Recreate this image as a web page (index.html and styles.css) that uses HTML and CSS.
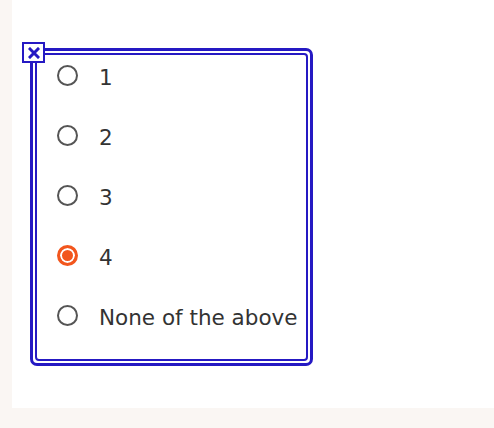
FILE: index.html
```html
<!DOCTYPE html>
<html lang="en">
<head>
    <meta charset="UTF-8">
    <title>Choice</title>
    <link rel="stylesheet" href="styles.css">
</head>
<body>

<div class="panel">
    <div class="frame">
        <span class="close">
            <svg width="12" height="12" viewBox="0 0 12 12">
                <path d="M2 2 L10 10 M10 2 L2 10" stroke="#2519c3" stroke-width="3" stroke-linecap="square"/>
            </svg>
        </span>
        <div class="inner">
            <label class="option"><input type="radio" name="answer"><span>1</span></label>
            <label class="option"><input type="radio" name="answer"><span>2</span></label>
            <label class="option"><input type="radio" name="answer"><span>3</span></label>
            <label class="option"><input type="radio" name="answer" checked><span>4</span></label>
            <label class="option"><input type="radio" name="answer"><span>None of the above</span></label>
        </div>
    </div>
</div>

</body>
</html>
```

FILE: styles.css
```css
html, body {
    margin: 0;
    padding: 0;
    height: 100%;
    background-color: #faf6f3;
    font-family: "DejaVu Sans", Verdana, sans-serif;
    color: #333;
    overflow: hidden;
}
.panel {
    margin-left: 12px;
    height: 408px;
    background-color: white;
    padding: 48px 0 0 18px;
    box-sizing: border-box;
}
.frame {
    position: relative;
    display: inline-block;
    border: 3px solid #2519c3;
    border-radius: 7px;
    padding: 2px;
}
.inner {
    border: 2px solid #2519c3;
    border-radius: 4px;
    padding: 0 8px 24px 20px;
    display: flex;
    flex-direction: column;
    gap: 20px;
}
.option {
    height: 40px;
    display: flex;
    align-items: center;
    gap: 21px;
    font-size: 21.5px;
    cursor: pointer;
}
.option span {
    padding-top: 5px;
}
.option input {
    appearance: none;
    margin: 0;
    width: 21px;
    height: 21px;
    border: 2px solid #555;
    border-radius: 50%;
    box-sizing: border-box;
    background-color: white;
}
.option input:checked {
    border: 3px solid #f2561d;
    background-color: #f2561d;
    box-shadow: inset 0 0 0 2px white;
}
.close {
    position: absolute;
    left: -11px;
    top: -9px;
    width: 23px;
    height: 21px;
    box-sizing: border-box;
    border: 2px solid #2519c3;
    background-color: white;
    display: flex;
    align-items: center;
    justify-content: center;
}
```
